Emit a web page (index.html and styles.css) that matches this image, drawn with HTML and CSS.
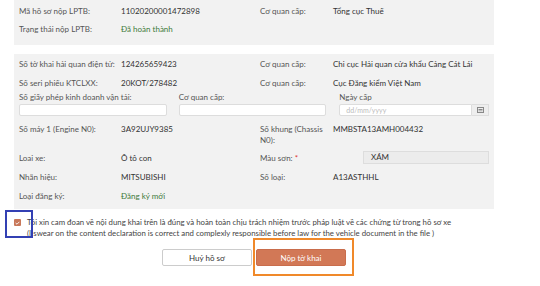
FILE: index.html
```html
<!DOCTYPE html>
<html lang="vi">
<head>
<meta charset="utf-8">
<link rel="stylesheet" href="styles.css">
</head>
<body>
<div class="page">
  <section class="panel panel-top">
    <div class="grid">
      <div class="lbl">Mã hồ sơ nộp LPTB:</div>
      <div class="val">11020200001472898</div>
      <div class="lbl">Cơ quan cấp:</div>
      <div class="val">Tổng cục Thuế</div>
      <div class="lbl">Trạng thái nộp LPTB:</div>
      <div class="val green">Đã hoàn thành</div>
      <div></div><div></div>
    </div>
  </section>

  <section class="panel panel-main">
    <div class="grid">
      <div class="lbl">Số tờ khai hải quan điện tử:</div>
      <div class="val">124265659423</div>
      <div class="lbl">Cơ quan cấp:</div>
      <div class="val">Chi cục Hải quan cửa khẩu Cảng Cát Lái</div>
      <div class="lbl">Số seri phiếu KTCLXX:</div>
      <div class="val">20KOT/278482</div>
      <div class="lbl">Cơ quan cấp:</div>
      <div class="val">Cục Đăng kiểm Việt Nam</div>
    </div>
    <div class="fields">
      <div class="field f1">
        <div class="flbl">Số giấy phép kinh doanh vận tải:</div>
        <div class="input"></div>
      </div>
      <div class="field f2">
        <div class="flbl">Cơ quan cấp:</div>
        <div class="input"></div>
      </div>
      <div class="field f3">
        <div class="flbl">Ngày cấp</div>
        <div class="date">
          <div class="input date-in"><span class="ph">dd/mm/yyyy</span></div>
          <div class="cal"><svg width="7" height="6" viewBox="0 0 7 6"><rect x="0.5" y="0.5" width="6" height="5" fill="none" stroke="#888" stroke-width="1"/><line x1="1.5" y1="2.5" x2="5.5" y2="2.5" stroke="#888"/><line x1="1.5" y1="3.8" x2="5.5" y2="3.8" stroke="#aaa"/></svg></div>
        </div>
      </div>
    </div>
    <div class="grid grid2">
      <div class="lbl top">Số máy 1 (Engine N0):</div>
      <div class="val top">3A92UJY9385</div>
      <div class="lbl top">Số khung (Chassis N0):</div>
      <div class="val top">MMBSTA13AMH004432</div>
      <div class="lbl">Loai xe:</div>
      <div class="val">Ô tô con</div>
      <div class="lbl">Màu sơn: <span class="req">*</span></div>
      <div class="val"><div class="color-in">XÁM</div></div>
      <div class="lbl">Nhãn hiệu:</div>
      <div class="val">MITSUBISHI</div>
      <div class="lbl">Số loại:</div>
      <div class="val">A13ASTHHL</div>
      <div class="lbl">Loại đăng ký:</div>
      <div class="val green">Đăng ký mới</div>
      <div></div><div></div>
    </div>
  </section>

  <div class="agree">
    <span class="check"><svg width="5" height="4" viewBox="0 0 5 4"><path d="M0.6 2 L2 3.2 L4.4 0.8" fill="none" stroke="#fff" stroke-width="0.9"/></svg></span>
    <div class="agree-text">
      <div>Tôi xin cam đoan về nội dung khai trên là đúng và hoàn toàn chịu trách nhiệm trước pháp luật về các chứng từ trong hồ sơ xe</div>
      <div>(I swear on the content declaration is correct and complexly responsible before law for the vehicle document in the file )</div>
    </div>
    <span class="mark-blue"></span>
  </div>

  <div class="actions">
    <button class="btn btn-cancel">Huỷ hồ sơ</button>
    <button class="btn btn-submit">Nộp tờ khai<span class="mark-orange"></span></button>
  </div>
</div>
</body>
</html>
```

FILE: styles.css
```css
* { box-sizing: border-box; }
html, body { margin: 0; padding: 0; background: #fff; }
body {
  font-family: Lato, "Open Sans", "Liberation Sans", sans-serif;
  font-size: 8px;
  color: #333;
  width: 540px;
  height: 286px;
  overflow: hidden;
}
.page { padding-left: 14px; }
.panel {
  width: 480px;
  background: #f2f2f2;
  padding: 0 5px;
}
.panel-top { height: 45px; padding-top: 2px; }
.panel-main { margin-top: 9px; height: 155px; padding-top: 0; }
.grid {
  display: grid;
  grid-template-columns: 102px 139px 73px 1fr;
  grid-auto-rows: 18px;
  align-items: center;
}
.panel-main .grid { grid-auto-rows: 19px; }
.lbl { color: #555; }
.val { color: #333; }
.green { color: #3d7a3a; }
.req { color: #d33; }

.fields { display: flex; gap: 12px; }
.field { display: flex; flex-direction: column; gap: 2px; }
.f1, .f2 { width: 148px; }
.f3 { width: 150px; margin-left: 1px; }
.flbl { color: #555; height: 10px; line-height: 10px; }
.input {
  height: 12px;
  background: #fff;
  border: 1px solid #ddd;
  border-radius: 2px;
}
.date { display: flex; }
.date-in { flex: 1; border-radius: 2px 0 0 2px; padding-left: 6px; line-height: 10px; }
.ph { color: #bbb; font-size: 7px; }
.cal {
  width: 17px; height: 12px;
  background: #eee;
  border: 1px solid #ddd; border-left: none;
  display: flex; align-items: center; justify-content: center;
}
.panel-main .grid2 {
  margin-top: 8px;
  grid-template-rows: 24px 19px 19px 19px;
}
.grid2 .top { align-self: start; line-height: 11px; }
.color-in {
  margin-left: 30px;
  height: 13px;
  background: #ececec;
  border: 1px solid #ddd;
  padding-left: 7px;
  line-height: 11px;
  color: #333;
}

.agree {
  position: relative;
  display: flex;
  gap: 6px;
  margin-top: 8px;
  color: #444;
  line-height: 11px;
  font-size: 7.8px;
}
.check {
  width: 7px; height: 7px;
  margin-top: 2px;
  background: #c8785a;
  border-radius: 1px;
  display: flex; align-items: center; justify-content: center;
  flex: none;
}
.mark-blue {
  position: absolute;
  left: -9px; top: -7px;
  width: 28px; height: 28px;
  border: 2px solid #3340b3;
}
.actions {
  display: flex;
  gap: 4px;
  margin-top: 10px;
  margin-left: 148px;
}
.btn {
  width: 90px; height: 17px;
  font: inherit;
  font-size: 8px;
  border-radius: 2px;
  padding: 0;
}
.btn-cancel { background: #fff; border: 1px solid #ccc; color: #333; }
.btn-submit {
  position: relative;
  background: #d27856; border: 1px solid #c96d4c; color: #fff;
}
.mark-orange {
  position: absolute;
  left: -4px; top: -12px;
  width: 101px; height: 38px;
  border: 2px solid #f0892a;
}
```
